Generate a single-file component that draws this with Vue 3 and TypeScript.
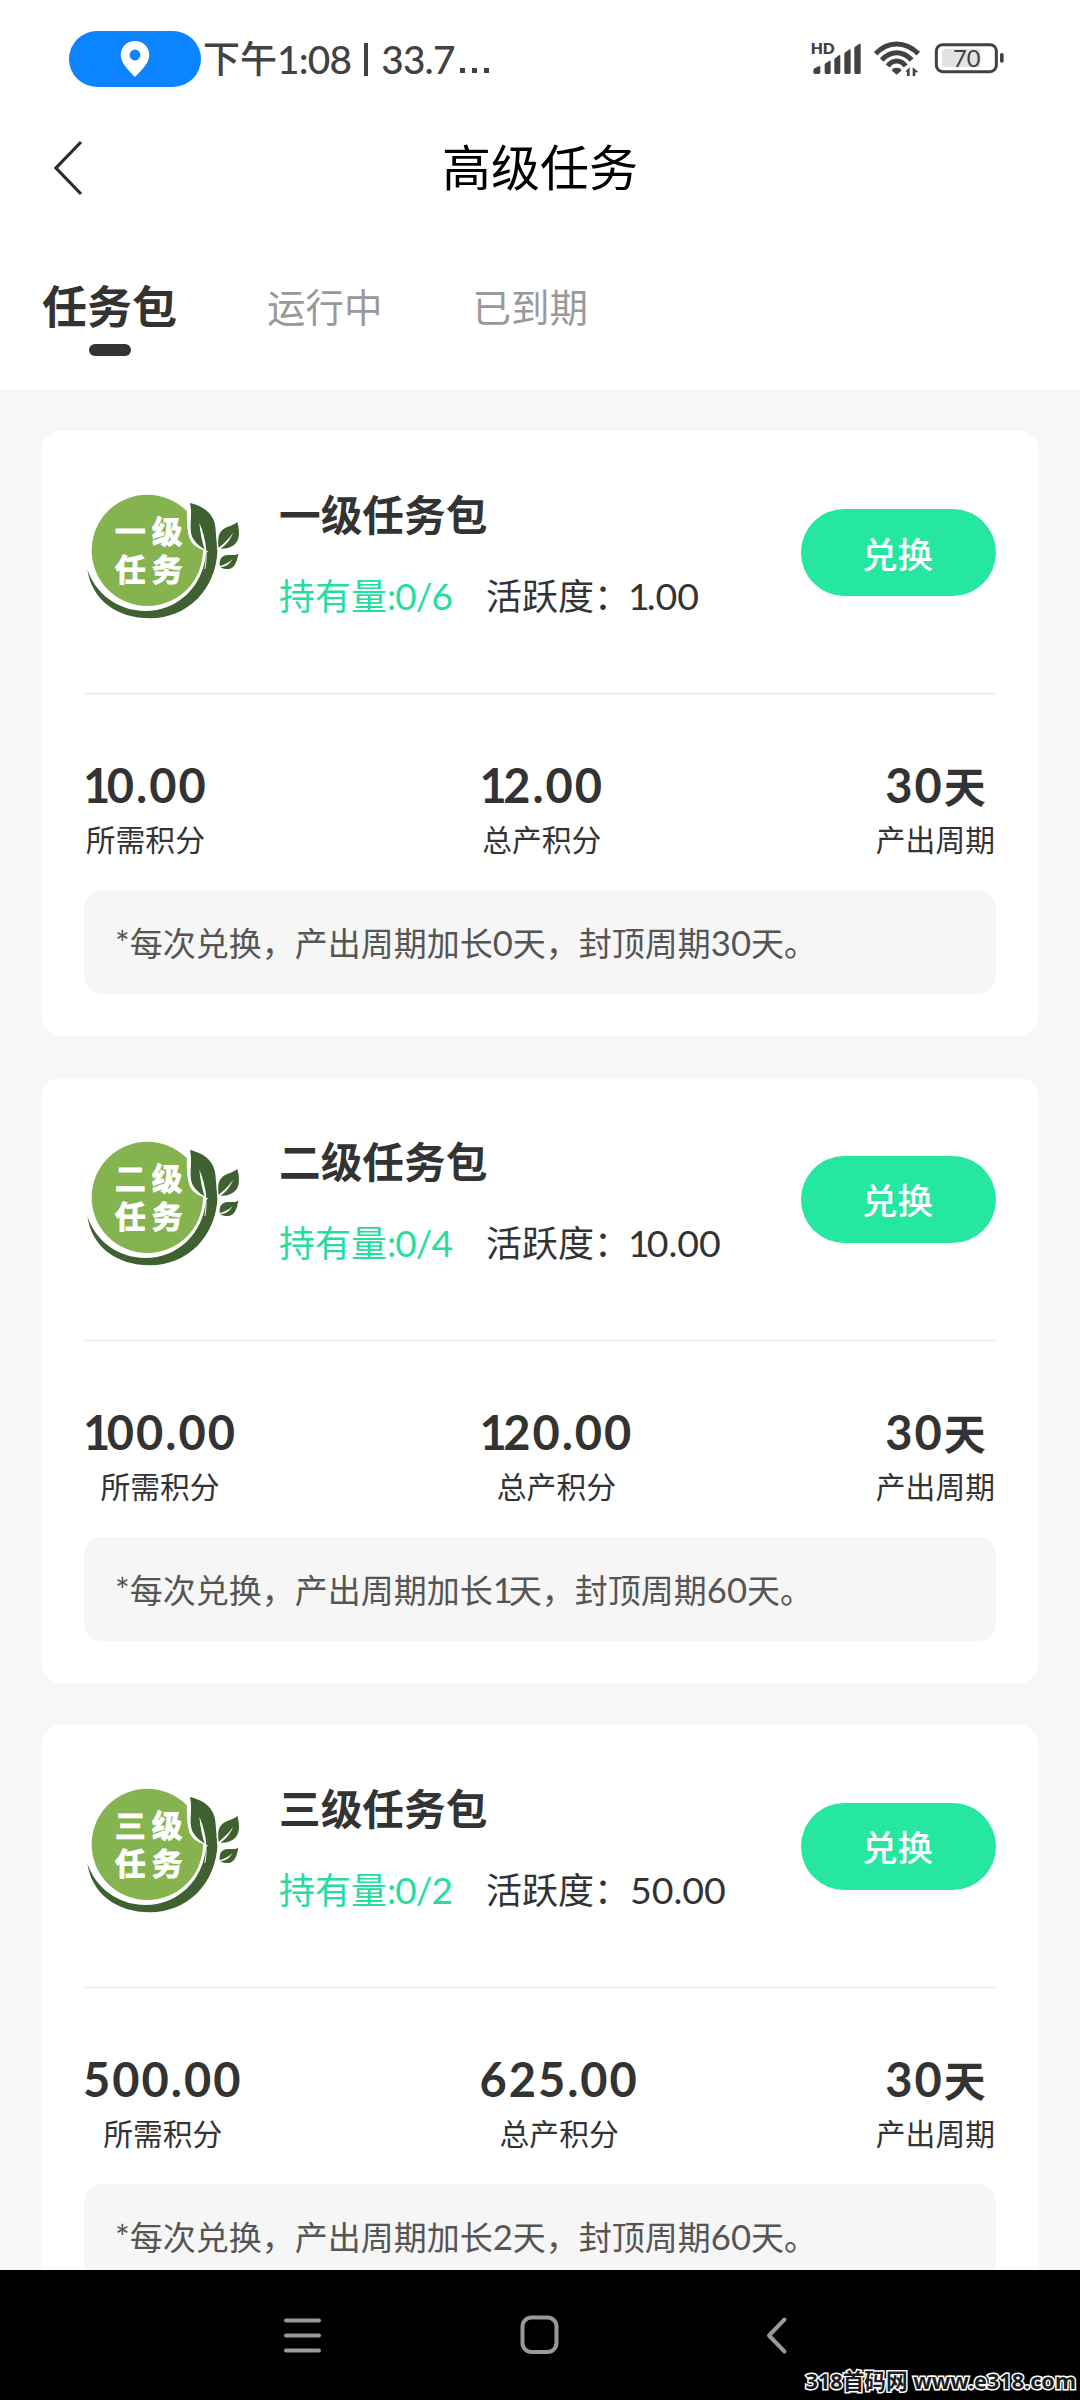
<script setup lang="ts">
interface Pack {
  level: string
  held: string
  activity: string
  cost: string
  total: string
  days: string
  note: string
}

interface Run {
  text: string
  latin: boolean
  one: boolean
}

const tabs: string[] = ['任务包', '运行中', '已到期']

const packs: Pack[] = [
  { level: '一', held: '0/6', activity: '1.00', cost: '10.00', total: '12.00', days: '30天', note: '*每次兑换，产出周期加长0天，封顶周期30天。' },
  { level: '二', held: '0/4', activity: '10.00', cost: '100.00', total: '120.00', days: '30天', note: '*每次兑换，产出周期加长1天，封顶周期60天。' },
  { level: '三', held: '0/2', activity: '50.00', cost: '500.00', total: '625.00', days: '30天', note: '*每次兑换，产出周期加长2天，封顶周期60天。' },
]

// Splits a string so that digits can be set slightly larger than Chinese text,
// with the narrow digit 1 kept apart for tighter spacing.
function runs(text: string): Run[] {
  return (text.match(/1|[\x21-\x30\x32-\x7e]+|[^\x21-\x7e]+/g) ?? []).map((t) => ({
    text: t,
    latin: /^[\x21-\x7e]/.test(t),
    one: t === '1',
  }))
}

function stats(p: Pack) {
  return [
    { value: p.cost, label: '所需积分' },
    { value: p.total, label: '总产积分' },
    { value: p.days, label: '产出周期' },
  ]
}
</script>

<template>
  <div class="screen">
    <div class="status">
      <div class="pill">
        <svg width="30" height="38" viewBox="0 0 30 38">
          <path fill="#fff" fill-rule="evenodd" d="M15 1C7 1 .7 7 .7 15c0 8 8 15.500 14.300 22 6.300-6.500 14.300-14 14.300-22C29.300 7 23 1 15 1zm0 8.600a5.400 5.400 0 1 1 0 10.800 5.400 5.400 0 0 1 0-10.800z" />
        </svg>
      </div>
      <div class="clock"><span>下午</span><span class="n">1:08</span><span class="bar"></span><span class="n">33.7</span><span class="dots"><i></i><i></i><i></i></span></div>
      <svg class="indicators" width="230" height="80" viewBox="0 0 690 240">
        <g fill="#424242">
          <text x="92" y="105" font-size="47" font-weight="800" textLength="72" lengthAdjust="spacingAndGlyphs">HD</text>
          <path d="M100 160v-6q0-4 4-6l13-7q4-1 4 3v16q0 5-5 5h-11q-5 0-5-5z" />
          <path d="M134 160v-22q0-4 4-6l11-7q3-1 3 3v32q0 5-4 5h-10q-4 0-4-5z" />
          <path d="M163 160v-38q0-4 4-6l11-8q3-1 3 3v49q0 5-4 5h-10q-4 0-4-5z" />
          <path d="M193 160v-55q0-4 4-6l12-8q3-1 3 3v66q0 5-4 5h-11q-4 0-4-5z" />
          <path d="M223 160v-72q0-4 4-6l12-8q3-1 3 3v83q0 5-4 5h-11q-4 0-4-5z" />
          <path d="M350 167l-14-12q0-9 14-9t14 9z" />
          <path d="M376 158l13-13v26h-8v-13zM398 171v-26l18 15h-10v11z" />
          <rect x="660" y="102" width="11" height="29" rx="5" />
        </g>
        <g fill="none" stroke="#424242" stroke-width="15">
          <path d="M287 104q28-29 63-29t65 29" />
          <path d="M305 123q20-22 45-22t45 22" />
          <path d="M323 141q11-15 27-15t27 15" />
        </g>
        <path fill="#e2e2e2" d="M498 89h103v56H498q-12 0-12-12v-32q0-12 12-12z" />
        <rect x="469" y="77" width="180" height="81" rx="19" fill="none" stroke="#424242" stroke-width="9" />
        <text x="560" y="143" font-size="71" text-anchor="middle" fill="#424242">70</text>
      </svg>
    </div>

    <header class="header">
      <svg class="back" width="30" height="56" viewBox="0 0 30 56">
        <path d="M27 2L2 28l25 26" fill="none" stroke="#2a2a2a" stroke-width="3.100" />
      </svg>
      <h1>高级任务</h1>
    </header>

    <nav class="tabs">
      <div v-for="(tab, i) in tabs" :key="tab" class="tab" :class="{ active: i === 0 }">{{ tab }}</div>
    </nav>

    <main class="list">
      <section v-for="p in packs" :key="p.level" class="card">
        <div class="top">
          <svg class="badge" width="190" height="170" viewBox="0 0 570 510">
            <circle cx="232" cy="241" r="167" fill="#84b34f" />
            <path d="M350 84C352 120 347 168 358 204C366 226 386 236 405 242L440 260L450 90z" fill="#fff" />
            <path d="M52 298C76 370 142 423 226 423C322 423 400 350 408 248L440 235C442 360 350 445 240 445C140 445 65 390 52 298z" fill="#3f6031" />
            <path d="M360 99C408 110 437 138 437 182L442 245C440 290 425 330 402 358C414 326 419 290 417 246L408 242C402 236 380 226 367 202C355 170 369 140 360 99z" fill="#3f6031" />
            <path d="M388 158C391 190 397 217 405 243C408 262 407 280 403 298L406 296C414 262 410 208 388 158z" fill="#fff" />
            <path d="M502 156C510 185 510 211 491 226C476 237 458 237 446 235C444 214 442 193 457 180C469 169 486 169 502 156z" fill="#3f6031" />
            <path d="M442 237C460 222 476 208 489 188C480 212 464 228 446 240z" fill="#fff" />
            <path d="M505 251C500 283 490 299 466 297C457 296 449 292 449 285C448 267 455 256 475 255C487 255 495 256 505 251z" fill="#3f6031" />
            <path d="M449 289C463 284 476 279 487 268C479 283 466 291 449 292z" fill="#fff" />
            <text x="135" y="218" class="badge-text">{{ p.level }}级</text>
            <text x="135" y="332" class="badge-text">任务</text>
          </svg>
          <div class="info">
            <h2>{{ p.level }}级任务包</h2>
            <div class="meta">
              <span class="held">持有量<span class="n">:{{ p.held }}</span></span>
              <span>活跃度：<span v-for="(r, i) in runs(p.activity)" :key="i" class="n" :class="{ one: r.one }">{{ r.text }}</span></span>
            </div>
          </div>
          <button class="swap">兑换</button>
        </div>
        <div class="stats">
          <div v-for="s in stats(p)" :key="s.label" class="stat">
            <div class="value"><span v-for="(r, i) in runs(s.value)" :key="i" :class="{ n: r.latin, one: r.one }">{{ r.text }}</span></div>
            <div class="label">{{ s.label }}</div>
          </div>
        </div>
        <div class="note"><span v-for="(r, i) in runs(p.note)" :key="i" :class="{ n: r.latin, one: r.one }">{{ r.text }}</span></div>
      </section>
    </main>

    <footer class="navbar">
      <svg width="600" height="60" viewBox="0 0 600 60" fill="none" stroke="#999" stroke-width="4" stroke-linecap="round" stroke-linejoin="round">
        <path d="M46 15.500h33M46 30.500h33M46 45.500h33" />
        <rect x="282.500" y="12.500" width="34" height="34.500" rx="9" />
        <path d="M544.500 14.500L529 30.500L544.500 46.500" />
      </svg>
      <div class="watermark">318首码网 www.e318.com</div>
    </footer>
  </div>
</template>

<style>
body {
  margin: 0;
}
</style>

<style scoped>
.screen {
  width: 1080px;
  height: 2400px;
  display: flex;
  flex-direction: column;
  overflow: hidden;
  background: #fff;
  color: #333;
  font-family: Lato, "Noto Sans CJK SC", sans-serif;
}
.n {
  font-size: 1.05em;
}
.status {
  height: 118px;
  flex: none;
  display: flex;
  align-items: center;
  padding-left: 69px;
}
.pill {
  width: 132px;
  height: 56px;
  border-radius: 28px;
  background: #0d84ff;
  display: flex;
  align-items: center;
  justify-content: center;
}
.clock {
  width: 579px;
  height: 56px;
  line-height: 56px;
  padding-left: 2px;
  box-sizing: border-box;
  display: flex;
  align-items: center;
  font-size: 37px;
  font-weight: 500;
  color: #424242;
}
.clock .n {
  letter-spacing: -0.800px;
}
.bar {
  width: 4px;
  height: 33px;
  margin: 0 13px 0 13px;
  background: #424242;
}
.dots {
  display: flex;
  gap: 7px;
  margin: 23px 0 0 5px;
}
.dots i {
  width: 5px;
  height: 5px;
  background: #424242;
}
.header {
  height: 100px;
  flex: none;
  display: grid;
  grid-template-columns: 1fr auto 1fr;
  align-items: center;
  padding: 0 54px;
}
h1 {
  margin: 0 0 2px;
  font-size: 49px;
  line-height: 60px;
  font-weight: 400;
  color: #000;
}
.tabs {
  height: 171px;
  flex: none;
  box-sizing: border-box;
  padding: 59px 42px 0;
  display: flex;
  gap: 90px;
}
.tab {
  height: 60px;
  line-height: 60px;
  font-size: 38.500px;
  color: #999;
}
.tab.active {
  line-height: 61px;
  font-size: 45px;
  font-weight: 700;
  color: #333;
}
.tab.active::after {
  content: "";
  display: block;
  width: 42px;
  height: 12px;
  margin: 6px auto 0;
  border-radius: 6px;
  background: #333;
}
.list {
  height: 1881px;
  box-sizing: border-box;
  flex: none;
  overflow: hidden;
  background: #f7f7f7;
  padding: 42px 42px 0;
}
.card {
  height: 604.800px;
  margin-bottom: 42px;
  box-sizing: border-box;
  padding: 39px 42px 0;
  border-radius: 18px;
  background: #fff;
}
.top {
  height: 225px;
  box-sizing: border-box;
  border-bottom: 3px solid #f2f2f2;
  display: flex;
  align-items: flex-start;
}
.badge {
  flex: none;
  margin-left: -14px;
}
.badge-text {
  font-size: 92px;
  font-weight: 700;
  letter-spacing: 18px;
  fill: #fff;
  stroke: #fff;
  stroke-width: 3px;
}
.info {
  flex: 1;
  padding-left: 19px;
}
h2 {
  margin: 15px 0 0;
  font-size: 41.700px;
  line-height: 60px;
  font-weight: 700;
}
.meta {
  display: flex;
  gap: 34px;
  margin-top: 21px;
  line-height: 60px;
  font-size: 36px;
  white-space: nowrap;
}
.meta .n {
  font-size: 37.500px;
}
.meta .n.one {
  margin-left: -2px;
  letter-spacing: -3px;
}
.meta .held .n {
  font-size: 37px;
  letter-spacing: -1px;
}
.held {
  color: #26dda0;
}
.swap {
  width: 195px;
  height: 87px;
  margin: 39px 0 0;
  padding: 0 2px 1px 0;
  border: 0;
  border-radius: 44px;
  background: #25e7a2;
  color: #fff;
  font: 500 35.500px "Noto Sans CJK SC", sans-serif;
}
.stats {
  height: 195px;
  box-sizing: border-box;
  margin: 0 1px 0 -1px;
  padding-top: 60px;
  display: flex;
  justify-content: space-between;
}
.stat {
  text-align: center;
}
.value {
  height: 60px;
  font-size: 42px;
  line-height: 60px;
  font-weight: 700;
}
.value .n {
  font-size: 47px;
  letter-spacing: 2px;
}
.value .n.one {
  letter-spacing: -3.500px;
}
.label {
  font-size: 29.800px;
  line-height: 49px;
}
.note {
  height: 104px;
  line-height: 105px;
  padding-left: 31px;
  border-radius: 18px;
  background: #f6f6f6;
  color: #555;
  font-size: 33px;
  white-space: nowrap;
}
.note .one {
  letter-spacing: -4px;
}
.navbar {
  position: relative;
  height: 130px;
  flex: none;
  background: #000;
  display: flex;
  justify-content: center;
  padding-top: 35px;
  box-sizing: border-box;
}
.watermark {
  position: absolute;
  right: 4px;
  bottom: 4px;
  font: 700 21.650px/30px "Noto Sans", "Noto Sans CJK SC", sans-serif;
  color: #1c1c1c;
  -webkit-text-stroke: 3px #fff;
  paint-order: stroke fill;
}
</style>
